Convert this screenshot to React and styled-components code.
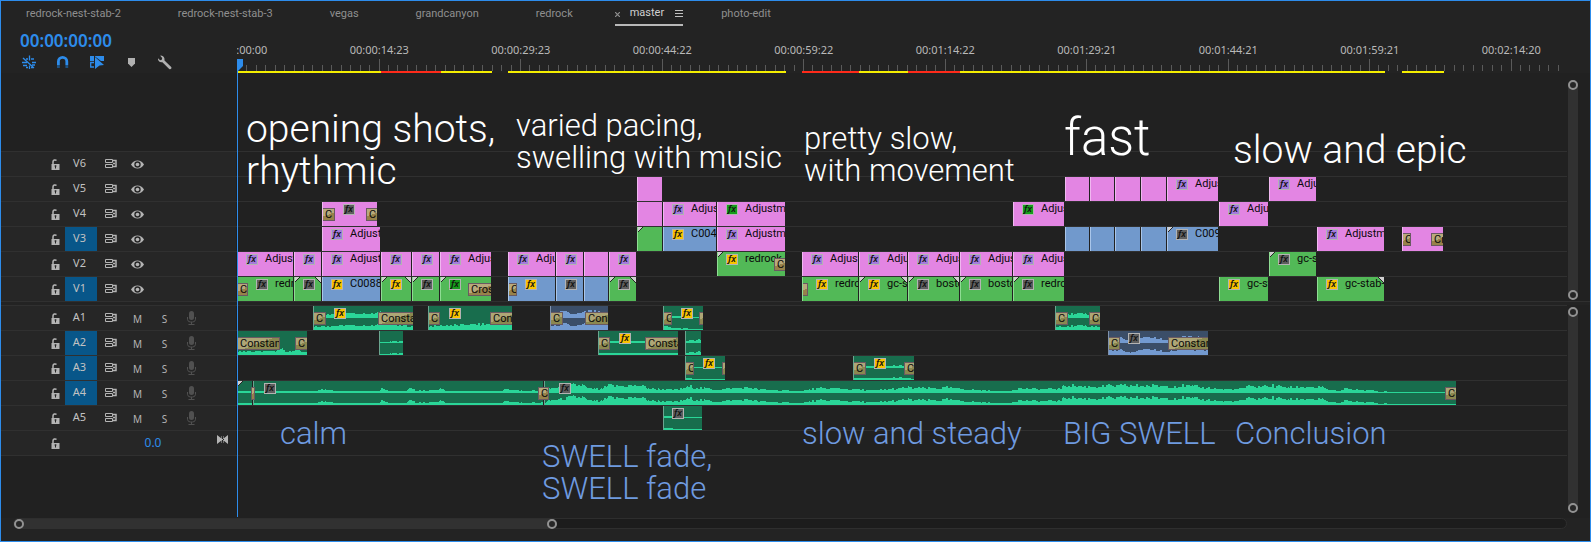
import React from "react";
import styled, { createGlobalStyle, css } from "styled-components";

const GlobalStyle = createGlobalStyle`
  * { box-sizing: border-box; }
  body {
    margin: 0;
    background: #232323;
    font-family: "Noto Sans", "Open Sans", sans-serif;
    font-size: 11px;
    line-height: 16px;
    color: #c8c8c8;
  }
  button {
    margin: 0;
    padding: 0;
    border: 0;
    background: none;
    color: inherit;
    font: inherit;
    cursor: pointer;
  }
  svg { display: block; }
`;

/* ---------- data ---------- */

const TABS = ["redrock-nest-stab-2", "redrock-nest-stab-3", "vegas", "grandcanyon", "redrock", "master", "photo-edit"];

const TIMES = [
  "00:00:00:00", "00:00:14:23", "00:00:29:23", "00:00:44:22", "00:00:59:22",
  "00:01:14:22", "00:01:29:21", "00:01:44:21", "00:01:59:21", "00:02:14:20",
];

const RENDER = [
  [0, 144, "yellow"], [144, 204, "red"], [204, 255, "yellow"], [271, 549, "yellow"],
  [565, 622, "red"], [622, 671, "yellow"], [671, 723, "red"], [723, 1148, "yellow"], [1165, 1207, "yellow"],
];

const clip = (start, end, tone, extra = {}) => ({ start, end, tone, ...extra });
const adj = (start, end, name, fx = "purple") => clip(start, end, "pink", { fx, name });

const VIDEO = [
  { name: "V6", clips: [] },
  {
    name: "V5",
    clips: [
      clip(400, 425, "pink"), clip(828, 852, "pink"), clip(853, 877, "pink"), clip(878, 903, "pink"),
      clip(904, 929, "pink"), adj(930, 981, "Adjustment"), adj(1032, 1079, "Adjustment"),
    ],
  },
  {
    name: "V4",
    clips: [
      clip(85, 140, "pink", { fx: "grey", fxAt: 21, fades: [[0, 12, "C"], [44, 55, "C"]] }),
      clip(400, 425, "pink"), adj(426, 479, "Adjustment"), adj(480, 548, "Adjustment", "green"),
      adj(776, 827, "Adjustment", "green"), adj(982, 1031, "Adjustment"),
    ],
  },
  {
    name: "V3",
    target: true,
    clips: [
      adj(85, 143, "Adjustment"), clip(400, 425, "green", { head: true }),
      clip(426, 479, "blue", { fx: "yellow", name: "C0043" }), adj(480, 548, "Adjustment"),
      clip(828, 852, "blue"), clip(853, 877, "blue"), clip(878, 903, "blue"), clip(904, 929, "blue"),
      clip(930, 981, "blue", { fx: "grey", name: "C0091", head: true }),
      adj(1080, 1147, "Adjustment"),
      clip(1165, 1206, "pink", { fades: [[0, 8, "C"], [29, 41, "Cr"]] }),
    ],
  },
  {
    name: "V2",
    clips: [
      adj(0, 56, "Adjustment"), adj(57, 84), adj(85, 143, "Adjustment"), adj(144, 174), adj(175, 202),
      adj(203, 254, "Adjustment"), adj(271, 318, "Adjustment"), adj(319, 346), clip(347, 371, "pink"), adj(372, 399),
      clip(480, 548, "green", { fx: "yellow", name: "redrock", head: true, fades: [[57, 68, "C"]] }),
      adj(565, 621, "Adjustment"), adj(622, 670, "Adjustment"), adj(671, 722, "Adjustment"),
      adj(723, 775, "Adjustment"), adj(776, 827, "Adjustment"),
      clip(1032, 1079, "green", { fx: "grey", name: "gc-stab", head: true }),
    ],
  },
  {
    name: "V1",
    target: true,
    clips: [
      clip(0, 56, "green", { fx: "grey", fxAt: 19, name: "redrock", fades: [[0, 10, "C"]] }),
      clip(57, 84, "green", { fx: "grey", head: true, tail: true }),
      clip(85, 143, "blue", { fx: "yellow", name: "C0088" }),
      clip(144, 174, "green", { fx: "yellow", head: true, tail: true }),
      clip(175, 202, "green", { fx: "grey", head: true }),
      clip(203, 254, "green", { fx: "green", head: true, fades: [[28, 51, "Cross"]] }),
      clip(271, 318, "blue", { fx: "yellow", fxAt: 17, fades: [[0, 8, "C"]] }),
      clip(319, 346, "blue", { fx: "grey" }), clip(347, 371, "blue"),
      clip(372, 399, "green", { fx: "grey", head: true, tail: true }),
      clip(565, 621, "green", { fx: "yellow", fxAt: 14, name: "redrock", fades: [[0, 5, ""]] }),
      clip(622, 670, "green", { fx: "yellow", name: "gc-stab", head: true, tail: true }),
      clip(671, 722, "green", { fx: "grey", name: "boston", head: true, tail: true }),
      clip(723, 775, "green", { fx: "grey", name: "boston", head: true }),
      clip(776, 827, "green", { fx: "grey", name: "redrock", head: true }),
      clip(982, 1031, "green", { fx: "yellow", name: "gc-stab" }),
      clip(1080, 1147, "green", { fx: "yellow", name: "gc-stab-2", tail: true }),
    ],
  },
];

/* wave: [position, level] pairs, positions counted from the clip's start */
const AUDIO = [
  {
    name: "A1",
    clips: [
      clip(76, 176, "teal", { fx: "yellow", fxAt: 21, fades: [[0, 12, "C"], [65, 100, "Constant"]], wave: [[0, 3], [30, 4], [60, 4], [75, 6], [85, 4], [100, 3]] }),
      clip(191, 275, "teal", { fx: "yellow", fxAt: 21, fades: [[0, 11, "C"], [62, 84, "Constant"]], wave: [[0, 3], [40, 5], [84, 6]], low: true }),
      clip(313, 371, "navy", { fades: [[0, 12, "C"], [35, 58, "Constant"]], wave: [[0, 3], [14, 6], [22, 3], [30, 4], [38, 7], [58, 4]] }),
      clip(426, 466, "teal", { fx: "yellow", fxAt: 18, fades: [[0, 8, "C"], [36, 40, ""]], wave: [[0, 3], [10, 1], [40, 0]] }),
      clip(818, 863, "teal", { fades: [[0, 12, "C"], [34, 45, "C"]], wave: [[0, 2], [20, 4], [30, 4], [45, 2]] }),
    ],
  },
  {
    name: "A2",
    target: true,
    clips: [
      clip(0, 70, "teal", { fades: [[0, 42, "Constant"], [58, 70, "C"]], wave: [[0, 3], [38, 3], [45, 6], [50, 2], [56, 5], [70, 2]], low: true }),
      clip(142, 166, "teal", { wave: [[0, 0], [24, 1]] }),
      clip(361, 441, "teal", { fx: "yellow", fxAt: 21, fades: [[0, 11, "C"], [47, 80, "Constant"]], wave: [[0, 1], [30, 1], [80, 1]] }),
      clip(448, 464, "teal", { wave: [[0, 1], [6, 2], [10, 1], [14, 4], [16, 0]] }),
      clip(871, 971, "navy", { fx: "grey", fxAt: 20, fades: [[0, 11, "C"], [60, 100, "Constant"]], wave: [[0, 4], [12, 5], [22, 2], [35, 6], [50, 4], [60, 3], [80, 6], [100, 4]] }),
    ],
  },
  {
    name: "A3",
    target: true,
    clips: [
      clip(448, 488, "teal", { fx: "yellow", fxAt: 18, fades: [[0, 8, "C"], [37, 40, ""]], wave: [[0, 2], [9, 0], [40, 0]] }),
      clip(616, 677, "teal", { fx: "yellow", fxAt: 21, fades: [[0, 12, "C"], [51, 61, "C"]], wave: [[0, 1], [30, 1], [48, 2], [61, 0]] }),
    ],
  },
  {
    name: "A4",
    target: true,
    clips: [
      clip(0, 15, "teal", { head: true, wave: [[0, 1], [15, 1]] }),
      clip(16, 306, "teal", {
        fx: "grey", fxAt: 11,
        wave: [[0, 1], [62, 1], [68, 4], [74, 2], [92, 1], [104, 1], [125, 1], [128, 4], [134, 2], [152, 1], [157, 4], [162, 2], [184, 2], [188, 4], [194, 1], [248, 1], [252, 3], [262, 2], [272, 1], [290, 2]],
      }),
      clip(307, 1219, "teal", {
        fx: "grey", fxAt: 15,
        wave: [
          [0, 1], [5, 4], [20, 6], [30, 8], [38, 8], [44, 4], [56, 3], [64, 7], [96, 7], [106, 4], [120, 3], [134, 3],
          [146, 6], [160, 4], [175, 3], [190, 4], [204, 5], [214, 3], [230, 2], [256, 1], [272, 4], [292, 4], [310, 3],
          [328, 2], [344, 3], [364, 5], [380, 4], [404, 5], [420, 3], [436, 2], [454, 1], [466, 1], [472, 4], [498, 3],
          [516, 4], [522, 8], [540, 6], [570, 7], [610, 7], [640, 7], [660, 5], [680, 3], [694, 3], [704, 6], [728, 7],
          [746, 5], [766, 6], [778, 5], [786, 2], [796, 1], [800, 4], [808, 3], [820, 2], [828, 2], [836, 0], [840, 1],
          [844, 0], [912, 0],
        ],
        fades: [[901, 912, "C"]],
      }),
    ],
    bridges: [[14, 17, ""], [301, 312, "C"]],
  },
  { name: "A5", clips: [clip(426, 465, "teal", { fx: "grey", wave: [[0, 1], [8, 1], [10, 0], [39, 0]] })] },
];

const NOTES = [
  { left: 245, top: 107, size: "large", lines: ["opening shots,", "rhythmic"] },
  { left: 515, top: 109, size: "medium", lines: ["varied pacing,", "swelling with music"] },
  { left: 803, top: 122, size: "medium", lines: ["pretty slow,", "with movement"] },
  { left: 1063, top: 107, size: "huge", lines: ["fast"] },
  { left: 1232, top: 128, size: "large", lines: ["slow and epic"] },
  { left: 279, top: 417, size: "medium", blue: true, lines: ["calm"] },
  { left: 541, top: 440, size: "medium", blue: true, lines: ["SWELL fade,", "SWELL fade"] },
  { left: 801, top: 417, size: "medium", blue: true, lines: ["slow and steady"] },
  { left: 1062, top: 417, size: "medium", blue: true, lines: ["BIG SWELL"] },
  { left: 1234, top: 417, size: "medium", blue: true, lines: ["Conclusion"] },
];

/* ---------- styles ---------- */

const BLUE = "#2d8ceb";
const LINE = "#303030";

const Panel = styled.main`
  display: flex;
  flex-direction: column;
  min-height: 100vh;
  border: 1px solid ${BLUE};
  background: #232323;
  position: relative;
  overflow: hidden;
`;

const TabBar = styled.nav`
  display: flex;
  gap: 23px;
  height: 28px;
  padding-left: 10px;
`;

const Tab = styled.button`
  display: flex;
  align-items: center;
  height: 25px;
  padding: 0 19px 0 15px;
  font-family: Roboto, sans-serif;
  color: #8f8f8f;
  white-space: nowrap;
  ${(p) => p.$active && css`
    padding: 0;
    color: #d0d0d0;
    border-bottom: 2px solid #b8b8b8;
    svg:first-child { margin: 3px 10px 0 0; }
    svg:last-child { margin: 2px 0 0 11px; }
  `}
`;

const TopRow = styled.header`
  display: flex;
  height: 44px;
`;

const Tools = styled.div`
  flex: none;
  width: 236px;
  padding-left: 19px;
`;

const Timecode = styled.div`
  height: 26px;
  line-height: 24px;
  font-size: 17px;
  font-weight: 600;
  color: ${BLUE};
`;

const ToolButtons = styled.div`
  display: flex;
  gap: 18px;
  padding-left: 1px;
  color: #b0b0b0;
`;

const ToolButton = styled.button`
  width: 16px;
  height: 16px;
  color: ${(p) => (p.$on ? BLUE : "#b0b0b0")};
`;

const Ruler = styled.div`
  flex: 1;
  min-width: 0;
  overflow: hidden;
  padding-top: 13px;
`;

const TimeLabels = styled.div`
  display: grid;
  grid-template-columns: repeat(10, 1fr);
  width: 1415px;
  margin-left: -70px;
  height: 17px;
  text-align: center;
  color: #b9b9b9;
`;

const RenderBar = styled.div`
  display: flex;
  height: 2px;
`;

const RenderPart = styled.div`
  flex: none;
  background: ${(p) => (p.$tone === "red" ? "#ff2a1a" : "#f4ee00")};
`;

const Tracks = styled.section`
  flex: 1;
  display: flex;
  flex-direction: column;
`;

const Pane = styled.div`
  display: flex;
  flex: ${(p) => (p.$grow ? "1" : "none")};
  background: #212121;
`;

const Rows = styled.div`
  flex: 1;
  min-width: 0;
  padding-top: ${(p) => (p.$headroom ? "78px" : "0")};
`;

const Row = styled.div`
  display: flex;
  height: 25px;
  border-top: 1px solid ${LINE};
`;

const PaneGap = styled.div`
  height: 4px;
  border-top: 1px solid ${LINE};
  background: #232323;
`;

const EndLine = styled.div`
  height: 1px;
  background: ${LINE};
`;

const Head = styled.div`
  flex: none;
  display: flex;
  align-items: center;
  width: 236px;
  padding-left: 48px;
  background: #262626;
  border-right: 1px solid #1f1f1f;
  color: #b4b4b4;
`;

const HeadButton = styled.button`
  display: grid;
  place-items: center;
  width: ${(p) => p.$w}px;
  height: 24px;
  color: ${(p) => (p.$dim ? "#505050" : "inherit")};
`;

const HeadSpacer = styled.span`
  width: 5px;
`;

const TrackName = styled.button`
  width: 32px;
  height: 24px;
  padding: 0 3px 2px 0;
  margin: 0 6px 0 4px;
  font-size: 11px;
  color: #c2c2c2;
  background: ${(p) => (p.$on ? "#085689" : "transparent")};
`;

const Letter = styled.button`
  width: 27px;
  height: 24px;
  padding-top: 2px;
  font-size: 10px;
`;

const MasterLevel = styled.span`
  width: 20px;
  margin-left: 82px;
  text-align: center;
  font-size: 12px;
  color: ${BLUE};
`;

const MasterKey = styled.button`
  margin: -8px 8px 0 auto;
`;

const Lane = styled.div`
  flex: 1;
  min-width: 0;
  display: flex;
  overflow: hidden;
  position: relative;
`;

const TONES = {
  pink: ["#e385e3", "#f0b8f0"],
  green: ["#52b957", "#8fdc93"],
  blue: ["#7199cc", "#a9c6ea"],
  teal: ["#186d4d", "#6aa58f"],
  navy: ["#3b4e68", "#7f92ad"],
};

const ClipBox = styled.div`
  flex: none;
  position: relative;
  height: 24px;
  overflow: hidden;
  background: ${(p) => TONES[p.$tone][0]};
  border-left: 1px solid ${(p) => TONES[p.$tone][1]};
`;

const ClipText = styled.span`
  position: absolute;
  top: -1px;
  color: #0a0a0a;
  font-family: Roboto, sans-serif;
  line-height: 16px;
  white-space: nowrap;
`;

const FX = { purple: "#a57bdc", yellow: "#fac300", green: "#169d1c", grey: "#5f5f5f" };

const FxBadge = styled.span`
  position: absolute;
  top: 2px;
  width: 12px;
  height: 11px;
  border: 1px solid #b3b3b3;
  background: ${(p) => FX[p.$tone]};
  color: #111;
  font: italic 600 9px/8px "Noto Sans", sans-serif;
  text-align: center;
`;

const Fade = styled.span`
  position: absolute;
  top: 6px;
  height: 13px;
  padding-left: 2px;
  overflow: hidden;
  border: 1px solid #6a5a62;
  background: linear-gradient(160deg, #b9aa7c 50%, #97824a 50%);
  color: #0a0a0a;
  font-family: Roboto, sans-serif;
  line-height: 12px;
  white-space: nowrap;
  ${(p) => p.$audio && css`
    background: linear-gradient(160deg, #aea676 50%, #8b8850 50%);
  `}
`;

const Corner = styled.span`
  position: absolute;
  top: 0;
  width: 6px;
  height: 6px;
  ${(p) => (p.$side === "head"
    ? css`
      left: -1px;
      background: linear-gradient(to bottom right, #cfcfcf 42%, #262626 42%, #262626 56%, transparent 56%);
    `
    : css`
      right: 0;
      background: linear-gradient(to bottom left, #cfcfcf 42%, #262626 42%, #262626 56%, transparent 56%);
    `)}
`;

const WaveSvg = styled.svg`
  position: absolute;
  left: -1px;
  top: 0;
`;

const VScroll = styled.div`
  flex: none;
  display: flex;
  flex-direction: column;
  justify-content: space-between;
  width: 10px;
  margin: ${(p) => (p.$first ? "7px 12px 1px 1px" : "2px 12px 5px 1px")};
  border-radius: 5px;
  background: #313131;
`;

const Ring = styled.button`
  flex: none;
  width: 10px;
  height: 10px;
  border: 2px solid #929292;
  border-radius: 50%;
  background: #262626;
`;

const HScroll = styled.div`
  height: 11px;
  margin: 0 23px 12px 12px;
  border: 1px solid #2e2e2e;
  border-radius: 6px;
  background: #1c1c1c;
`;

const HThumb = styled.div`
  display: flex;
  justify-content: space-between;
  width: 35%;
  height: 10px;
  border-radius: 5px;
  background: #313131;
`;

const Playhead = styled.div`
  position: absolute;
  left: 236px;
  top: 70px;
  bottom: 24px;
  width: 1px;
  background: ${BLUE};
`;

const NOTE_SIZES = {
  medium: "31px/32px",
  large: "39px/42px",
  huge: "51px/60px",
};

const Note = styled.p`
  position: absolute;
  margin: 0;
  font: 350 ${(p) => NOTE_SIZES[p.$size]} Roboto, sans-serif;
  color: ${(p) => (p.$blue ? "#6f9be0" : "#ffffff")};
  white-space: nowrap;
`;

/* ---------- drawings ---------- */

const LockIcon = () => (
  <svg width="9" height="11" viewBox="0 0 9 11" fill="none" aria-hidden="true">
    <path d="M2 5V3a2 2 0 0 1 3.5-1.4" stroke="currentColor" strokeWidth="1.5" />
    <path d="M0.500 5h8v6h-8z" fill="currentColor" />
    <path d="M4.500 6.500v3M3.500 7h2" stroke="#262626" />
  </svg>
);

const SyncIcon = () => (
  <svg width="12" height="10" viewBox="0 0 12 10" fill="none" stroke="currentColor" aria-hidden="true">
    <path d="M0.500 0.500h7v3h-7zM0.500 5.500h7v3h-7z" />
    <path d="M8 1.500h3v6H8M8 4.500h2" strokeWidth="1.500" />
  </svg>
);

const EyeIcon = () => (
  <svg width="13" height="9" viewBox="0 0 13 9" aria-hidden="true">
    <path d="M0 4.500C1.600 1.700 3.800 0.500 6.500 0.500s4.900 1.200 6.500 4C11.400 7.300 9.200 8.500 6.500 8.500S1.600 7.300 0 4.500Z" fill="currentColor" />
    <circle cx="6.500" cy="4.500" r="3.200" fill="#262626" />
    <circle cx="6.500" cy="4.500" r="1.800" fill="currentColor" />
  </svg>
);

const MicIcon = () => (
  <svg width="9" height="14" viewBox="0 0 9 14" fill="none" aria-hidden="true">
    <rect x="2" y="0" width="5" height="9" rx="2.500" fill="currentColor" />
    <path d="M0.500 6v2.500a3 3 0 0 0 3 2.500h2a3 3 0 0 0 3-2.500V6M4.500 11v2M1.500 13.500h6" stroke="currentColor" />
  </svg>
);

const BowIcon = () => (
  <svg width="11" height="9" viewBox="0 0 11 9" fill="currentColor" aria-hidden="true">
    <path d="M0 0l4.500 3.500V1h0.500v7H4.500V5.500L0 9zM11 0L6.500 3.500V1H6v7h0.500V5.500L11 9zM4 4h3v1H4z" />
  </svg>
);

const TOOLS = [
  {
    label: "Insert nests as clips", on: true,
    art: (
      <g stroke="currentColor" fill="none">
        <path d="M8.500 0.500v5M8.500 10.500v3.500M2 3l11 10" strokeWidth="1.300" />
        <path d="M5 4h2M10 4h3M1 7.500h5M11 7.500h4M2 10.500h4M5 12.500h2M10 12.500h2M11 10h3" strokeWidth="1.600" />
      </g>
    ),
  },
  {
    label: "Snap", on: true,
    art: (
      <g fill="none" strokeWidth="2.800">
        <path d="M3.400 10V6.500a4.200 4.200 0 0 1 8.400 0V10" stroke="currentColor" />
        <path d="M3.400 10v3M11.800 10v3" stroke="#1d5283" />
      </g>
    ),
  },
  {
    label: "Linked selection", on: true,
    art: (
      <g>
        <path d="M1 1h4v5H1zM6 1h9v5h-3L6 1.500zM6 2l9 8-4.500 0.500L6 14z" fill="currentColor" />
        <path d="M5 7.500H1.700v4.500H5" stroke="currentColor" fill="none" strokeWidth="1.300" />
      </g>
    ),
  },
  { label: "Add marker", art: <path d="M5 3h7v5.500L8.500 12 5 8.500z" fill="currentColor" /> },
  {
    label: "Timeline display settings",
    art: (
      <path d="M4 0.500l-0.800 0.300 2 2.300-0.400 1.600-1.700 0.500L1 3.300c-0.400 2.500 1.500 4.300 4.400 3.900l6.800 6.900c1.300 0.900 3-0.700 2-2L7.500 5.500C7.900 2.600 6.400 0.700 4 0.500z" fill="currentColor" />
    ),
  },
];

const CloseIcon = () => (
  <svg width="5" height="5" viewBox="0 0 5 5" stroke="#8f8f8f" aria-hidden="true">
    <path d="M0 0l5 5M5 0L0 5" strokeWidth="1.200" />
  </svg>
);

const MenuIcon = () => (
  <svg width="8" height="7" viewBox="0 0 8 7" fill="#c0c0c0" aria-hidden="true">
    <path d="M0 0h8v1H0zM0 3h8v1H0zM0 6h8v1H0z" />
  </svg>
);

const TICK_STEP = 141.5 / 15;

function Ticks() {
  const marks = Array.from({ length: 141 }, (_, i) => (
    <rect key={i} x={Math.round(i * TICK_STEP)} y={i % 15 ? 6 : 0} width="1" height={i % 15 ? 6 : 12} />
  ));
  return (
    <svg width="1400" height="12" viewBox="0 0 1400 12" fill="#5a5a5a" aria-hidden="true">
      {marks}
      <path d="M0 0h6v7l-5 5H0z" fill={BLUE} />
    </svg>
  );
}

function levelAt(points, x) {
  for (let i = 1; i < points.length; i += 1) {
    const [x0, y0] = points[i - 1];
    const [x1, y1] = points[i];
    if (x <= x1) return y0 + ((y1 - y0) * (x - x0)) / (x1 - x0);
  }
  return points[points.length - 1][1];
}

function jitter(n) {
  const v = Math.sin(n * 12.9898) * 43758.5453;
  return v - Math.floor(v);
}

function channelPath(points, width, base, seed) {
  let d = `M0 ${base}`;
  for (let x = 0; x < width; x += 1) {
    const level = levelAt(points, x);
    const step = Math.floor(x / 2);
    const h = 1 + Math.round(level * (0.6 + 0.55 * jitter(step + seed)));
    d += `V${base - Math.min(h, 11)}h1`;
  }
  return `${d}V${base}z`;
}

function Wave({ points, width, tone, low, seed }) {
  const fill = tone === "navy" ? "#739ad0" : "#2ad698";
  return (
    <WaveSvg width={width} height="24" viewBox={`0 0 ${width} 24`} fill={fill} aria-hidden="true">
      {!low && <path d={channelPath(points, width, 12, seed)} />}
      <path d={channelPath(points, width, 24, seed)} />
    </WaveSvg>
  );
}

/* ---------- parts ---------- */

function Clip({ data, after, audio }) {
  const { start, end, tone, fx, fxAt = 9, name, fades = [], head, tail, wave, low } = data;
  const width = end - start;
  return (
    <ClipBox $tone={tone} style={{ width, marginLeft: start - after }}>
      {wave && <Wave points={wave} width={width} tone={tone} low={low} seed={start} />}
      {name && <ClipText style={{ left: fxAt + 18 }}>{name}</ClipText>}
      {fx && <FxBadge $tone={fx} style={{ left: fxAt - 1 }}>fx</FxBadge>}
      {head && <Corner $side="head" />}
      {tail && <Corner $side="tail" />}
      {fades.map(([from, to, label]) => (
        <Fade key={from} $audio={audio} style={{ left: from - 1, width: to - from + 1 }}>{label}</Fade>
      ))}
    </ClipBox>
  );
}

function TrackLane({ track, audio }) {
  return (
    <Lane>
      {track.clips.map((c, i) => (
        <Clip key={c.start} data={c} audio={audio} after={i ? track.clips[i - 1].end : 0} />
      ))}
      {(track.bridges || []).map(([from, to, label]) => (
        <Fade key={from} style={{ left: from, width: to - from }}>{label}</Fade>
      ))}
    </Lane>
  );
}

function TrackRow({ track, audio }) {
  return (
    <Row>
      <Head>
        <HeadButton $w={12} aria-label={`Lock ${track.name}`}><LockIcon /></HeadButton>
        <TrackName $on={track.target}>{track.name}</TrackName>
        <HeadButton $w={16} aria-label={`Sync lock ${track.name}`}><SyncIcon /></HeadButton>
        <HeadSpacer />
        {audio ? (
          <>
            <Letter aria-label={`Mute ${track.name}`}>M</Letter>
            <Letter aria-label={`Solo ${track.name}`}>S</Letter>
            <HeadButton $w={27} $dim aria-label={`Record ${track.name}`}><MicIcon /></HeadButton>
          </>
        ) : (
          <HeadButton $w={27} aria-label={`Show ${track.name}`}><EyeIcon /></HeadButton>
        )}
      </Head>
      <TrackLane track={track} audio={audio} />
    </Row>
  );
}

export default function App() {
  return (
    <>
      <GlobalStyle />
      <Panel>
        <TabBar>
          {TABS.map((name) => (
            name === "master" ? (
              <Tab key={name} $active aria-current="page"><CloseIcon />{name}<MenuIcon /></Tab>
            ) : (
              <Tab key={name}>{name}</Tab>
            )
          ))}
        </TabBar>
        <TopRow>
          <Tools>
            <Timecode>00:00:00:00</Timecode>
            <ToolButtons>
              {TOOLS.map((t) => (
                <ToolButton key={t.label} $on={t.on} aria-label={t.label}>
                  <svg width="16" height="16" viewBox="0 0 16 16" aria-hidden="true">{t.art}</svg>
                </ToolButton>
              ))}
            </ToolButtons>
          </Tools>
          <Ruler>
            <TimeLabels>{TIMES.map((t) => <span key={t}>{t}</span>)}</TimeLabels>
            <Ticks />
            <RenderBar>
              {RENDER.map(([from, to, tone], i) => (
                <RenderPart
                  key={from}
                  $tone={tone}
                  style={{ width: to - from, marginLeft: from - (i ? RENDER[i - 1][1] : 0) }}
                />
              ))}
            </RenderBar>
          </Ruler>
        </TopRow>
        <Tracks>
          <Pane>
            <Rows $headroom>
              {VIDEO.map((t) => <TrackRow key={t.name} track={t} />)}
            </Rows>
            <VScroll $first>
              <Ring aria-label="Video scroll top" />
              <Ring aria-label="Video scroll bottom" />
            </VScroll>
          </Pane>
          <PaneGap />
          <Pane $grow>
            <Rows>
              {AUDIO.map((t) => <TrackRow key={t.name} track={t} audio />)}
              <Row>
                <Head>
                  <HeadButton $w={12} aria-label="Lock master"><LockIcon /></HeadButton>
                  <MasterLevel>0.0</MasterLevel>
                  <MasterKey aria-label="Master keyframes"><BowIcon /></MasterKey>
                </Head>
              </Row>
              <EndLine />
            </Rows>
            <VScroll>
              <Ring aria-label="Audio scroll top" />
              <Ring aria-label="Audio scroll bottom" />
            </VScroll>
          </Pane>
        </Tracks>
        <HScroll>
          <HThumb>
            <Ring aria-label="Zoom start" />
            <Ring aria-label="Zoom end" />
          </HThumb>
        </HScroll>
        <Playhead />
        {NOTES.map((n) => (
          <Note key={`${n.left}-${n.top}`} $size={n.size} $blue={n.blue} style={{ left: n.left, top: n.top }}>
            {n.lines.map((line, i) => (
              <React.Fragment key={line}>{i > 0 && <br />}{line}</React.Fragment>
            ))}
          </Note>
        ))}
      </Panel>
    </>
  );
}
